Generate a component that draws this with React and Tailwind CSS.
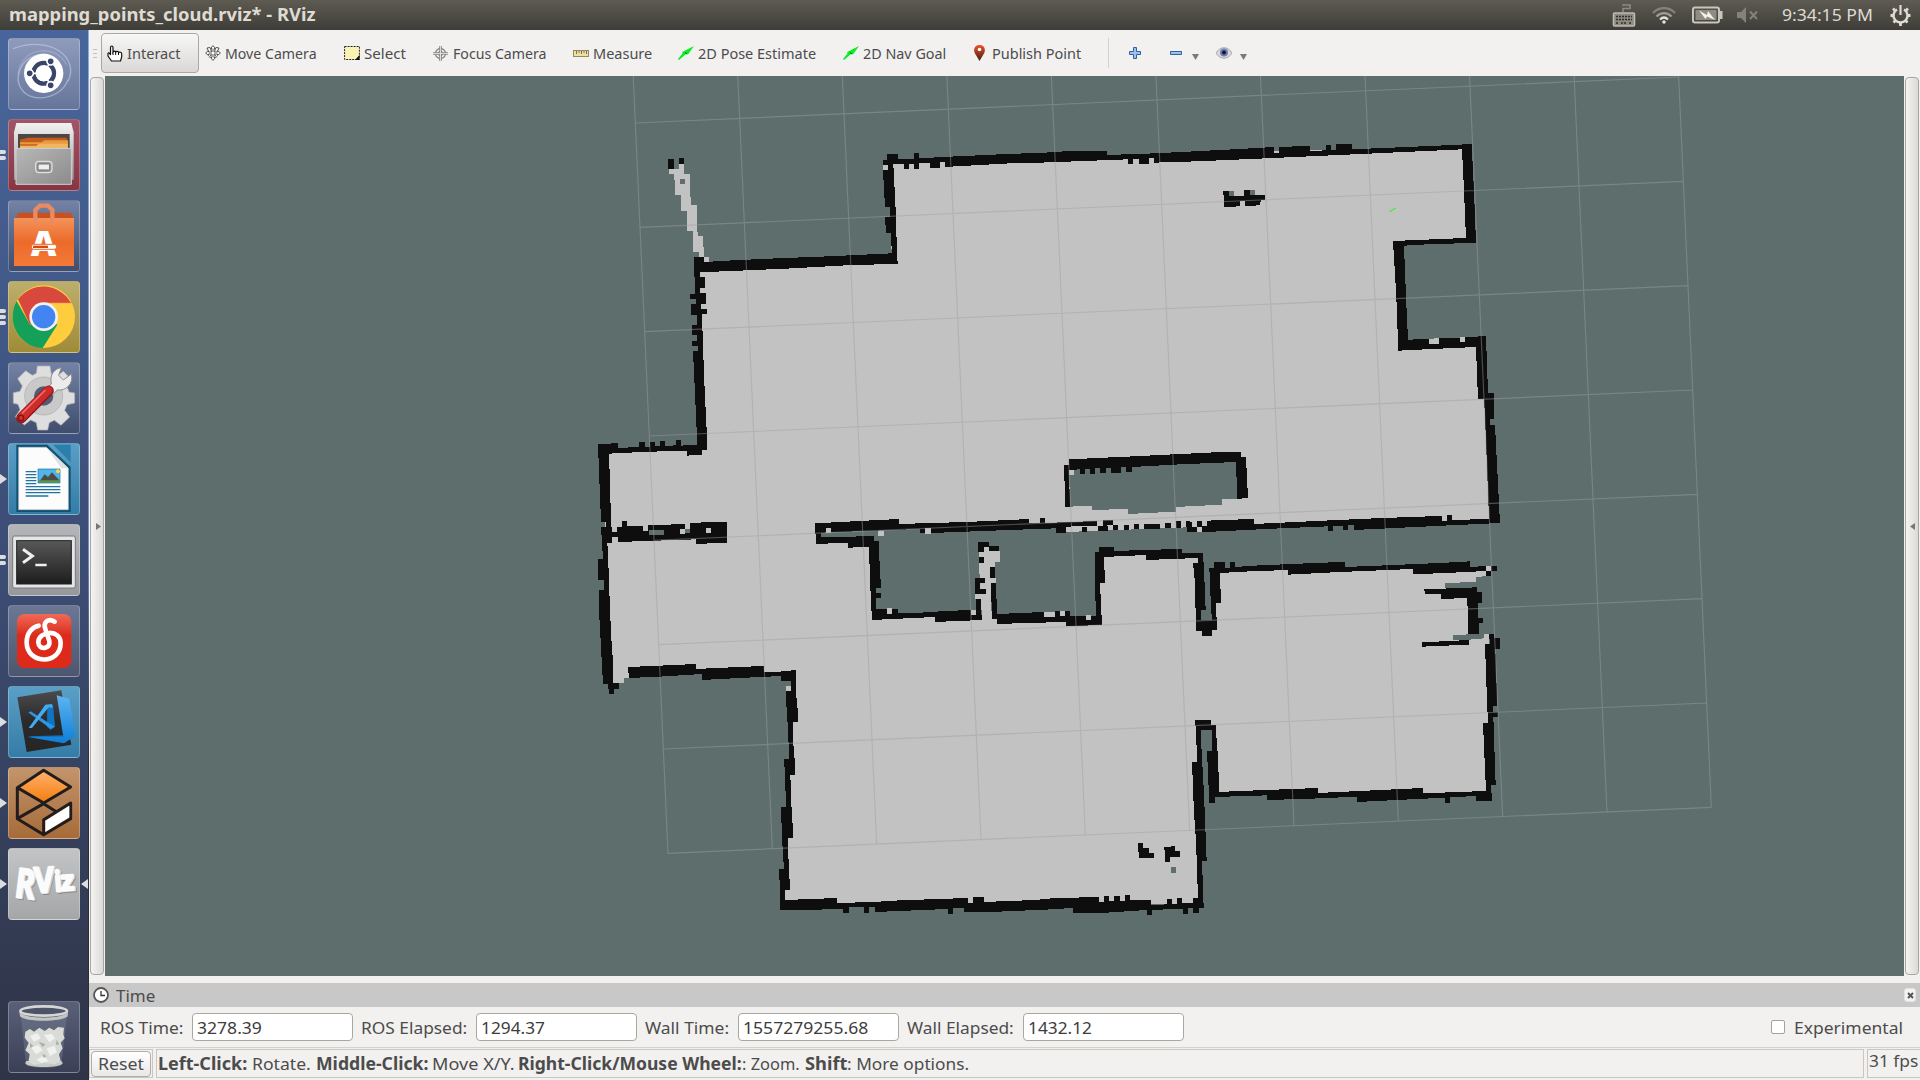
import React, { useLayoutEffect, useRef, useState } from "react";

const FONT = "font-['Noto_Sans','Open_Sans',sans-serif]";

// Text squeezed or stretched horizontally to fill a given width.
function Fit({ w, className = "", children }) {
  const ref = useRef(null);
  const [scale, setScale] = useState(1);
  useLayoutEffect(() => {
    const n = ref.current.offsetWidth;
    if (n) setScale(w / n);
  }, [w]);
  return (
    <span className={`block shrink-0 whitespace-nowrap ${className}`} style={{ width: w }}>
      <span ref={ref} className="inline-block origin-left" style={{ transform: `scaleX(${scale})` }}>
        {children}
      </span>
    </span>
  );
}

const FLOOR =
  "M930 90L2655 50L2675 330L2455 340L2468 645L2705 635L2712 800H2728L2742 1172L2200 1190L1400 1190L715 1195V1238H870L885 1460L1190 1460H1240L1400 1465L1552 1468L1552 1270L1860 1275L1858 1490H1903L1905 1320L2718 1315V1338L2688 1342V1355L2595 1360V1375H2680V1512L2619 1516V1531L2685 1528L2712 1525V1512H2727L2735 1750L2725 1990L1895 1992V1790H1855V2322L610 2325L640 1630L147 1615V1644H132V1659H99L75 1230V960L360 950L355 400L935 385Z";

const A_BLACK =
  "M909 90H922V72H954V88L1002 86V69H1017V85L1110 80L1260 73L1440 66V96L1290 100L1110 110H1095V96H1080V113H1050V99L1017 100V117H1002V101H987V117H972V102L940 103L948 258L950 340L953 402L815 405L620 416L500 421L360 427V441H374V473H360V489H378V521H363V537H380V552H366L369 650L374 780L380 900V960H366V974L321 977V963H270L120 969L87 971L90 1060L93 1175L96 1206V1239H81V1262H66V1240L63 1190H78V1175H63L60 1100L54 942H93V939H114V954L177 951V936H195V951H210V936H225V949H240V933H255V948L288 946V930H302V947L352 944L345 790L339 663H354V648H336V632H350V615H336V585H350V554H333V521H348V507H330V491H345V440H342V381H372V396L460 391L590 385L720 380L810 376L936 370L932 308H918L915 262H930V230H915L909 120ZM264 87H282V117H264ZM297 84H312V102H297Z" +
  "M90 1206H111V1190H126V1173H141V1187H189V1203H205V1186L315 1182V1197H330V1179L396 1176H441V1238L348 1242V1228L200 1233L114 1236V1221H90Z" +
  "M705 1180L840 1173L957 1167V1182L1160 1176L1347 1167V1180L1380 1178V1164H1395V1178H1440V1209H1428V1195L1260 1201L1055 1209H1020V1197L723 1208V1222L805 1221L851 1218H879V1233H897V1260H867V1251L805 1253V1238L708 1242Z";

const B_BLACK =
  "M0 69L105 62H200V75L345 70L600 57L702 51V68H717V52L780 48H810V63L858 61V45H873V60H888V42H936V58L1240 45L1295 42L1302 180L1308 339L1180 342L1092 347L1098 500L1104 629L1165 627L1313 620V618H1338L1344 789H1362V867H1350V885H1365L1380 1179L1230 1186L942 1200V1186H925V1201H910V1187H879V1203H864V1189L720 1195L500 1206H442V1175H456V1190H471V1173H486V1187H501V1172L580 1169L642 1167V1182L830 1173L1005 1165L1140 1160L1206 1158V1173H1221V1155H1236V1170L1347 1167L1335 860L1332 807H1314L1308 651L1200 656L1075 662L1069 500L1059 333L1180 328L1278 324L1272 180L1266 58L985 71L700 84L470 94L342 98V84H327V101H297V87H279V101H264V88L0 98Z" +
  "M0 1164H15V1179L170 1173V1188H189V1171H218V1185H204V1190H78V1209H48V1193L0 1195Z";

const B_DOTS =
  "M126 1190h15v16h-15zM173 1187h31v17h-31zM220 1186h15v15h-15zM252 1185h15v15h-15zM282 1182h15v15h-15zM313 1182h47v14h-47zM376 1179h17v16h-17zM408 1172h15v23h-15zM438 1174h12v16h-12z";

const PILLAR =
  "M87 988L280 979L545 966H603V981H618L624 1104L591 1107V1080L588 996L420 1003L276 1011V1026H258V1011H243V1028H213V1014H198V1029H180V1015H165V1031H150V1017H135V1032H120V1018L87 1020L90 1130H76L72 1005H87ZM550 183H567V197H612V180H630V195H675V209H663L660 226L615 228V213H600V229L552 231Z";

const C_BLACK =
  "M66 120H81L84 157L87 250L93 400L99 485V549H117V567H102V582H87V567H84V552H69L57 330V270H72V240H54V178H69Z" +
  "M144 501L240 497L348 492V507L478 501L551 498V515H600L648 510V558L651 625H654V666H640L639 700L642 774H645V825H631L634 921H636L639 1013H624L627 1137H630V1169H615V1200L771 1194V1209L880 1206L960 1201L1164 1194V1209H1179V1191H1212V1206L1440 1197V1227L1210 1237H1152V1225H1119V1242H1104V1227L885 1236V1221H867V1239H852V1221H806V1239H789V1226L690 1230H600V1170L597 1107H612L606 1013L603 921H618L615 825L612 777H627L624 666H621L618 573V558H633V543H603V528L480 534L366 540V522L240 530L147 534Z" +
  "M851 108H882V123H897L900 237H903V264H888V279H903V295H888V327H953V340L1075 336V334L1173 330V345H1188V297H1203V345H1206V360L1065 366V351L876 360L870 240L867 140H805V126H851Z";

const C_POST =
  "M1194 126H1227V138H1257V153H1227V141H1212V156H1194ZM1197 171H1212V188H1197ZM1230 201H1245V234H1230ZM1185 234H1215V249H1200V267H1218V282H1185ZM1233 249H1248L1251 342L1440 334V366L1251 372V357H1236Z";

const D_BLACK =
  "M0 337L75 333H90V348H168L170 344H167L165 156H162H177V141H222V153L318 150L412 147H426V160H489L492 210L497 330H483V360L516 361L513 320L508 204H522V186H555V203H570V186H585V201L660 196L850 188L915 186V201L1040 196L1200 189L1290 184V200L1338 199V198H1370V213H1353V227H1338V213L1200 220L1119 222V207L900 216L745 224V210L630 214L540 219L543 310H528L531 390H516V408H486V393H468L465 250L459 188H474V174L318 180V165L192 171L195 248H180L186 375L78 379V366L0 368Z" +
  "M1153 268L1310 262V276H1326V308H1313V354H1329V370H1316V402H1284V340L1281 294L1203 297V282H1155ZM1146 427L1287 420V434L1146 440Z" +
  "M1347 402H1362V414H1380V446H1366L1372 618H1360V636H1373V650H1360L1367 855H1353L1356 903H1308V888L1230 892V909H1215V893L950 906V890L815 896L681 900V886L525 891V908H508L501 753H516V689H483V720L492 880L500 1083H486L491 1223H476V1239H460V1225H443V1241H429V1226L335 1230V1245H320V1230L200 1238H99V1224L0 1230V1197L60 1194L177 1191V1205H192V1189H207V1203H222V1188H240V1203H255V1186H270V1200H333V1216L381 1213V1197H396V1212H411V1194H426V1210H460V1195H474L468 1020L462 940L456 786H471L468 677H465V660H513V674H528L531 753H534L537 876L600 873L835 864V879L1148 864V880L1338 873L1329 670H1344L1341 600L1335 432H1350Z" +
  "M294 1029H309V1044H327V1059H342V1074H297V1055H294ZM372 1041H393V1038H405V1053H420V1070H390V1085H375V1050H372Z";

function gridPath() {
  let d = "";
  for (let i = 0; i <= 10; i++) {
    const x = 264 + 313 * i, y = 2170 - 13.8 * i;
    d += `M${x} ${y}L${x - 140} ${y - 3130}`;
    const u = 264 - 14 * i, v = 2170 - 313 * i;
    d += `M${u} ${v}L${u + 3130} ${v - 138}`;
  }
  return d;
}

function MapView() {
  const bg = "#5e6e6c", free = "#c2c2c2", wall = "#0e0e0e";
  return (
    <svg className="block h-[900px] w-[1799px] bg-[#5e6e6c]" viewBox="105 76 1799 900">
      <g transform="translate(580 130) scale(0.333333)">
        <g shapeRendering="crispEdges">
          <path fill={free} d={FLOOR} />
          <path fill={free} d="M267 117H297V102H312V132H330V175L333 225H351V290L354 318H369L372 380H387V396H372V381H357V366H339V303H321V242H303V195H285V150H282V133H267Z" />
          <path fill={bg} d="M300 147h15v15h-15z" />
          <path fill={bg} d="M723 1200H890V1222H723Z" />
          <path fill={wall} d={A_BLACK} />
          <path fill={bg} d="M207 1201L252 1199V1215H207ZM315 1197h15v12h-15z" />
          <path fill={free} d="M909 105h15v15h-15zM300 1197h15v15h-15zM378 1194h15v15h-15zM738 1194h15v15h-15zM894 1202h18v15h-18zM1035 1195h18v16h-18z" />
          <g transform="translate(1380 0)">
            <path fill={wall} d={B_BLACK} />
            <path fill={free} d="M78 1190L218 1186V1170L442 1165V1192L78 1206ZM170 1173h19v15h-19zM471 1190h15v16h-15zM1167 627L1197 624V641H1167ZM1260 621h15v15h-15z" />
            <path fill={wall} d={B_DOTS} />
            <path fill={wall} d="M189 1171h29v15h-29z" />
            <path fill={bg} d="M87 1005L600 985L591 1107H546V1124L407 1131V1145L264 1152V1137L156 1140V1127L90 1130ZM567 183h15v14h-15zM630 180h15v15h-15z" />
            <path fill={wall} d={PILLAR} />
            <path fill={free} d="M87 1020h15v15h-15z" />
          </g>
          <g transform="translate(0 1110)">
            <path fill={wall} d={C_BLACK} />
            <path fill={free} d="M1197 155H1212V141H1227V153H1260V187H1245V235H1248V249H1233V300L1236 362H1206L1203 297H1185V282H1200Z" />
            <path fill={wall} d={C_POST} />
            <path fill={free} d="M618 558h15v15h-15zM921 324h15v18h-15zM1173 330h15v15h-15zM1392 336h33v15h-33z" />
          </g>
          <g transform="translate(1380 1110)">
            <path fill={wall} d={D_BLACK} />
            <path fill={free} d="M1338 198h15v15h-15zM138 345h15v15h-15zM12 336h33v14h-33zM60 333h15v15h-15z" />
            <path fill={bg} d="M393 1101h15v17h-15z" />
          </g>
        </g>
        <path d={gridPath()} fill="none" stroke="#a0a0a4" strokeOpacity=".46" strokeWidth="3.4" />
        <path d="M2428 245L2447 234" stroke="#3ef02a" strokeWidth="3.5" />
      </g>
    </svg>
  );
}

const TILE = {
  dash: "bg-linear-to-b from-[#8f9bbd] to-[#66759b]",
  red: "bg-linear-to-b from-[#a05568] to-[#883543]",
  blue: "bg-linear-to-b from-[#7483a5] to-[#3f4d6e]",
  gold: "bg-linear-to-b from-[#bcae6d] to-[#a08c36]",
  cyan: "bg-linear-to-b from-[#5a9fc6] to-[#347ca6]",
  gray: "bg-linear-to-b from-[#b4b5b9] to-[#97989c]",
  slate: "bg-linear-to-b from-[#6a7893] to-[#4c566f]",
  brown: "bg-linear-to-b from-[#c3946c] to-[#a66b38]",
  silver: "bg-linear-to-b from-[#c3c4c6] to-[#a5a6a8]",
  dark: "bg-linear-to-b from-[#596078] to-[#3b4057]",
};

function Tile({ tone, marks = 0, active, className = "", children }) {
  return (
    <div className={`flex w-[88px] shrink-0 items-center justify-between ${className}`}>
      <div className="flex w-2 shrink-0 flex-col items-start justify-center gap-[2px]">
        {marks === 1 && <svg className="h-[10px] w-[7px]" viewBox="0 0 7 10"><path d="M0 0L7 5L0 10Z" fill="#dcdde0" /></svg>}
        {marks > 1 && Array.from({ length: marks }, (_, i) => <div key={i} className="h-1 w-[6px] rounded-r-full bg-[#dcdde0]" />)}
      </div>
      <div className={`h-[72px] w-[72px] shrink-0 overflow-hidden rounded-[4px] border border-white/25 ${TILE[tone]}`}>
        <svg className="-m-px h-[72px] w-[72px]" viewBox="0 0 216 216">{children}</svg>
      </div>
      <div className="flex w-2 shrink-0 justify-end">
        {active && <svg className="h-[10px] w-[7px]" viewBox="0 0 7 10"><path d="M7 0V10L0 5Z" fill="#dcdde0" /></svg>}
      </div>
    </div>
  );
}

function Defs() {
  return (
    <svg className="absolute h-0 w-0">
      <defs>
        <linearGradient id="metal" x2="0" y2="1"><stop stopColor="#f2f2f2" /><stop offset="1" stopColor="#9a9a9a" /></linearGradient>
        <linearGradient id="drawer" x2="1" y2="1"><stop stopColor="#b8b8b8" /><stop offset="1" stopColor="#8b8b8b" /></linearGradient>
        <linearGradient id="bag" x2="0" y2="1"><stop stopColor="#f4935a" /><stop offset=".5" stopColor="#ec6a2a" /><stop offset="1" stopColor="#f47a38" /></linearGradient>
        <linearGradient id="term" x2="0" y2="1"><stop stopColor="#585858" /><stop offset="1" stopColor="#1d1d1d" /></linearGradient>
        <linearGradient id="slab" x2="0" y2="1"><stop stopColor="#4c4c4e" /><stop offset=".5" stopColor="#2a2a2b" /><stop offset="1" stopColor="#262627" /></linearGradient>
        <linearGradient id="vside" x2="0" y2="1"><stop stopColor="#5db4f2" /><stop offset="1" stopColor="#0d7fd8" /></linearGradient>
        <linearGradient id="boxtop" x2="0" y2="1"><stop stopColor="#ffb26c" /><stop offset="1" stopColor="#f57c0e" /></linearGradient>
        <linearGradient id="pin" x2="0" y2="1"><stop stopColor="#f0502c" /><stop offset="1" stopColor="#3c2010" /></linearGradient>
        <linearGradient id="netred" x2="0" y2="1"><stop stopColor="#ef6a58" /><stop offset=".4" stopColor="#dd2a1b" /></linearGradient>
      </defs>
    </svg>
  );
}

function RvizLetters({ fill, stroke, dx = 0, dy = 0 }) {
  return (
    <g fill={fill} stroke={stroke} strokeWidth="6" strokeLinejoin="round" transform={`translate(${dx} ${dy})`} className="font-['Open_Sans']" fontWeight="700">
      <text transform="translate(18 146) rotate(7) scale(.74 1)" fontSize="122">R</text>
      <text transform="translate(80 134) rotate(-2) scale(.86 1)" fontSize="106">V</text>
      <text transform="translate(142 130) rotate(-4) scale(.8 1)" fontSize="84">i</text>
      <text transform="translate(160 128) rotate(-4)" fontSize="84">z</text>
    </g>
  );
}

function Launcher() {
  return (
    <aside className="flex shrink-0">
      <div className="flex w-[88px] flex-col gap-[9px] bg-linear-to-b from-[#48669c] via-[#3c4d75] via-50% to-[#2f3446] pt-2">
        <Tile tone="dash">
          <g fill="none" stroke="#cdd4e8" strokeOpacity=".55" strokeWidth="4">
            <path d="M30 130C30 70 70 50 110 48M15 32C130-10 215 60 180 130M180 125C160 190 40 205 30 125" />
            <path d="M30 110C40 20 150 20 175 80" strokeOpacity=".3" />
          </g>
          <circle cx="107" cy="106" r="59" fill="#fff" />
          <circle cx="107" cy="106" r="31" fill="none" stroke="#39466a" strokeWidth="13" />
          <path d="M107 106L56 106M107 106L133 62M107 106L133 150" stroke="#fff" strokeWidth="5" />
          <g stroke="#fff" strokeWidth="5" fill="#39466a"><circle cx="65" cy="106" r="11" /><circle cx="128" cy="70" r="11" /><circle cx="128" cy="142" r="11" /></g>
          <circle cx="107" cy="106" r="24" fill="#fff" />
        </Tile>
        <Tile tone="red" marks={2}>
          <path d="M25 12H190L197 40V182H18V40Z" fill="url(#metal)" />
          <path d="M30 45H185V150H30Z" fill="#4a4744" />
          <path d="M36 62L60 56H176L180 90H36Z" fill="#c75b1c" />
          <path d="M36 70H100L110 64H180V76H36Z" fill="#e89a40" /><path d="M36 80H85L92 74H180V90H36Z" fill="#efb65f" />
          <path d="M24 88H190V196H24Z" fill="url(#drawer)" stroke="#d0d0d0" strokeWidth="3" />
          <rect x="83" y="127" width="49" height="34" rx="10" fill="#999" stroke="#dedede" strokeWidth="4" />
          <rect x="90" y="135" width="35" height="18" rx="3" fill="#eee" stroke="#6f6f6f" strokeWidth="3" />
        </Tile>
        <Tile tone="blue">
          <path d="M25 54L30 38H188L196 54Z" fill="#c9511f" />
          <path d="M18 54H198V198H18Z" fill="url(#bag)" />
          <path d="M82 70V30L96 17H120L133 30V70" fill="none" stroke="#e98a63" strokeWidth="13" />
          <text x="107" y="168" textAnchor="middle" fontSize="106" fontWeight="800" fill="#fff" className="font-['Open_Sans']">A</text>
          <rect x="70" y="133" width="76" height="15" rx="7" fill="#fff" stroke="#ec6a2a" strokeWidth="3" /><rect x="75" y="137" width="45" height="7" fill="#d9480f" />
        </Tile>
        <Tile tone="gold" marks={3}>
          <circle cx="107" cy="107" r="94" fill="#fdcd3e" />
          <path d="M107 107L66 131L26 60A94 94 0 0 0 104 201L148 131Z" fill="#15a05a" />
          <path d="M188 65A94 94 0 0 0 30 55L66 131L107 65Z" fill="#d8483d" />
          <path d="M107 65H190" stroke="#e0564b" strokeWidth="2" />
          <circle cx="107" cy="107" r="43" fill="#f1f1f1" /><circle cx="107" cy="107" r="35" fill="#4384f3" />
        </Tile>
        <Tile tone="blue">
          <path d="M88 12h38l4 24 16 7 20-15 25 25-14 21 6 16 17 3v30l-23 5-7 17 15 20-26 25-20-15-15 7-5 22H89l-4-22-17-8-19 15-27-25 14-21-6-16-14-3V92l20-4 7-16-14-22 24-24 20 14 12-6Z" fill="#dedede" stroke="#b0b0b0" strokeWidth="2" />
          <circle cx="107" cy="102" r="43" fill="#525d75" stroke="#c9c9c9" strokeWidth="28" /><circle cx="107" cy="102" r="57" fill="none" stroke="#aaa" strokeWidth="2" />
          <path d="M130 66C124 36 140 20 160 17L152 40L166 54L190 36C198 66 172 88 148 84L134 98L114 80Z" fill="#ececec" stroke="#8c8c8c" strokeWidth="3" />
          <path d="M40 168L122 86" stroke="#8d1616" strokeWidth="31" strokeLinecap="round" />
          <path d="M40 167L121 85" stroke="#cf2b2a" strokeWidth="25" strokeLinecap="round" />
          <path d="M42 154L112 84" stroke="#e9716b" strokeWidth="5" />
          <circle cx="39" cy="168" r="8" fill="#d9302d" stroke="#7d1212" strokeWidth="4" />
        </Tile>
        <Tile tone="cyan" marks={1}>
          <path d="M25 5H118L188 72V207H25Z" fill="#0e5173" />
          <path d="M32 13H115L181 76V200H32Z" fill="#fcfcfc" stroke="#c6c6c6" strokeWidth="2" />
          <path d="M115 13L181 76H160Z" fill="#e0e0e0" /><path d="M135 5H188V58Z" fill="#2b7fab" />
          <path d="M53 86h32M53 95h32M53 104h32M53 113h32M53 122h32M53 131h104M53 140h104M53 149h104M53 159h68" stroke="#2173a0" strokeWidth="4" />
          <path d="M90 78H156V120H90Z" fill="#53b4e8" stroke="#1574ab" strokeWidth="2" />
          <path d="M92 118L110 94L120 102L132 88L154 112V118Z" fill="#4a4e47" /><path d="M92 112H154V118H92Z" fill="#5d963b" /><circle cx="150" cy="85" r="6" fill="#f7d643" />
        </Tile>
        <Tile tone="gray" marks={2}>
          <rect x="14" y="36" width="188" height="156" rx="6" fill="#e5e5e5" stroke="#77787b" strokeWidth="3" />
          <rect x="26" y="50" width="164" height="130" fill="url(#term)" stroke="#222" strokeWidth="3" />
          <path d="M45 76L73 96L45 116" fill="none" stroke="#efefef" strokeWidth="9" /><path d="M82 123H116" stroke="#efefef" strokeWidth="8" />
        </Tile>
        <Tile tone="slate">
          <rect x="27" y="27" width="163" height="162" rx="22" fill="url(#netred)" />
          <path d="M140 50C120 38 105 52 112 72L124 108C130 132 92 138 91 112C91 78 158 70 158 115C158 180 56 180 56 112C56 82 74 66 92 62" fill="none" stroke="#fff" strokeWidth="14" strokeLinecap="round" />
        </Tile>
        <Tile tone="cyan" marks={1}>
          <path d="M28 34L160 13L190 176L56 198Z" fill="url(#slab)" />
          <path d="M58 151L165 148L168 170Z" fill="#0b6fbd" />
          <path d="M146 28L184 38L202 150L168 172L60 153L166 152Z" fill="url(#vside)" />
          <path d="M118 60L135 56L141 122L128 132L117 122Z" fill="#0f74c2" />
          <path d="M62 80L128 128L140 122L68 76L55 84Z" fill="#2b96e6" />
          <path d="M62 126L112 56L132 54L134 66L122 64L72 126Z" fill="#45a9f0" />
        </Tile>
        <Tile tone="brown" marks={1}>
          <path d="M107 10L188 60L107 108L28 62Z" fill="url(#boxtop)" stroke="#211d1d" strokeWidth="9" strokeLinejoin="round" />
          <path d="M28 62V155L107 203L188 155V108L107 158V203M28 155L107 110L145 134" fill="none" stroke="#211d1d" strokeWidth="9" strokeLinejoin="round" />
          <path d="M112 161L184 116V151L112 195Z" fill="#fff" />
        </Tile>
        <Tile tone="silver" marks={1} active>
          <RvizLetters fill="#8a8b8e" stroke="#8a8b8e" dx={5} dy={5} />
          <RvizLetters fill="#d4d4d4" stroke="#d4d4d4" dx={3} dy={2} />
          <RvizLetters fill="#fbfbfb" stroke="#fbfbfb" dx={-1} />
        </Tile>
        <Tile tone="dark" className="mt-auto mb-[7px]">
          <path d="M38 38L54 192C75 204 142 204 160 192L178 38Z" fill="#8c94a6" fillOpacity=".3" />
          <path d="M52 186C52 202 164 202 164 186L160 180H55Z" fill="#c6ccc6" />
          <path d="M52 92L66 84L78 92L94 80L110 90L124 80L138 88L150 78L168 80L166 100L170 112L158 125L164 142L153 160L158 180L140 190L107 186L80 192L61 184L65 160L52 148L62 126L50 110Z" fill="#d9dbd7" />
          <path d="M66 105L88 96L98 112L78 122ZM108 102L130 98L142 112L124 124ZM70 140L90 132L104 148L84 160ZM116 142L140 134L146 154L126 166ZM86 176L106 164L122 180L100 186Z" fill="#f1f2ef" />
          <path d="M92 122L112 130L104 138ZM66 126L76 134L66 142ZM146 116L154 130L144 132ZM104 158L116 166L106 170Z" fill="#a9aea9" />
          <ellipse cx="107" cy="30" rx="70" ry="14" fill="#4d5468" stroke="#d5d6d5" strokeWidth="8" />
          <path d="M34 32C50 56 165 56 180 32L179 46C160 64 52 64 36 46Z" fill="#c4c5c3" />
        </Tile>
      </div>
      <div className="w-px bg-linear-to-b from-[#86aee6] via-[#6b8cc4] via-50% to-[#2a2e3c] to-70%" />
    </aside>
  );
}

function TitleBar() {
  return (
    <header className="flex h-[30px] shrink-0 items-center bg-linear-to-b from-[#5e5b52] to-[#3e3d38] pl-[9px] text-[#dfdbd2]">
      <Fit w={306} className="text-[17px] leading-[30px] font-bold">mapping_points_cloud.rviz* - RViz</Fit>
      <div className="ml-auto flex items-center pr-[9px]">
        <svg className="mr-4 h-6 w-6" viewBox="0 0 24 24" fill="none" stroke="#bdbab2" strokeWidth="1.6">
          <rect x="1.5" y="10" width="21" height="13" rx="1" fill="#8d8a82" /><path d="M11 9V5.500H18V2H10" stroke="#8d8a82" />
          <path d="M4 13.500H20M4 16.500H20M4 20H7M9 20H15M17 20H20" strokeDasharray="2 1" stroke="#2f2e2b" />
        </svg>
        <svg className="mr-4 h-[17px] w-6" viewBox="0 0 24 17" fill="none" strokeWidth="2.200">
          <path d="M1 6C7-.5 17-.5 23 6" stroke="#85827a" /><path d="M4.500 9.500C9 5 15 5 19.500 9.500" stroke="#9f9c94" /><path d="M8 12.500C10.500 10 13.500 10 16 12.500" stroke="#e5e1d8" /><circle cx="12" cy="15" r="1.800" fill="#e5e1d8" />
        </svg>
        <svg className="mr-[14px] h-[18px] w-[31px]" viewBox="0 0 31 18">
          <rect x="1" y="1.500" width="26" height="15" rx="2" fill="none" stroke="#c9c6bd" strokeWidth="2" /><rect x="3.500" y="4" width="21" height="10" fill="#8f8c84" />
          <path d="M28 5H30.500V13H28Z" fill="#c9c6bd" /><path d="M7 4.500L15 9L16 5L23 14L15 10.500L13.500 13Z" fill="#f4f1ea" />
        </svg>
        <svg className="mr-[23px] h-4 w-[22px]" viewBox="0 0 22 16"><path d="M0 5H4L9 0V16L4 11H0Z" fill="#85827a" /><path d="M13 4.500L20 12M20 4.500L13 12" stroke="#85827a" strokeWidth="2" /></svg>
        <Fit w={91} className="mr-[17px] text-[17px] leading-[30px]">9:34:15 PM</Fit>
        <svg className="h-[21px] w-[21px]" viewBox="0 0 21 21" fill="none" stroke="#dfdbd2">
          <path d="M7 4.500A7 7 0 1 0 14 4.500" strokeWidth="2.400" /><path d="M10.500 0V10" strokeWidth="2.200" />
          <path d="M.5 10.500H3M18 10.500H20.500M10.500 18V21M3.500 17.500L5.500 15.500M17.500 17.500L15.500 15.500M3 3.500L5 5.500M18 3.500L16 5.500" strokeWidth="2.800" />
        </svg>
      </div>
    </header>
  );
}

const icons = {
  hand: <svg className="h-[17px] w-4" viewBox="0 0 16 17"><path d="M3.500 10V2.500C3.500.5 6 .5 6 2.500V7C7 5.500 8.500 6 8.700 7C9.500 5.800 11.300 6.200 11.500 7.500C13 6.500 14.700 7.500 14.700 9V12L13.500 16H4.500L1 11V8.500C1.500 7.500 3 8 3.500 10Z" fill="#fff" stroke="#111" strokeWidth="1.200" /><path d="M6 7V10M8.700 7V10M11.500 7.500V10" stroke="#111" /></svg>,
  move: <svg className="h-4 w-4" viewBox="0 0 16 16" fill="#fff" stroke="#555"><path d="M8 .6L10.500 3.500H9V7H12.500V5.500L15.400 8L12.500 10.500V9H9V12.500H10.500L8 15.400L5.500 12.500H7V9H3.500V10.500L.6 8L3.500 5.500V7H7V3.500H5.500Z" /><path d="M2 3L5 2.500L6.500 6.500M14 3L11 2.500L9.500 6.500M2 3L3 5.500M14 3L13 5.500M4 12.500L6 10M12 12.500L10 10" /></svg>,
  select: <svg className="h-4 w-4" viewBox="0 0 16 16"><rect x=".6" y="1.500" width="14.800" height="13" fill="#fbf3b4" stroke="#222" strokeDasharray="2 1" /><path d="M15.500 10V15H11Z" fill="#111" /></svg>,
  focus: <svg className="h-[17px] w-[17px]" viewBox="0 0 17 17" fill="none" stroke="#888"><circle cx="8.500" cy="8.500" r="5" strokeWidth="1.300" /><circle cx="8.500" cy="8.500" r="2.300" /><path d="M8.500 1V16M1 8.500H16" strokeWidth="2.600" /><path d="M8.500 1V16M1 8.500H16" stroke="#eee" strokeWidth=".8" /></svg>,
  ruler: <svg className="h-[7px] w-4" viewBox="0 0 16 7"><rect x=".5" y=".5" width="15" height="6" fill="#eee1a0" stroke="#938968" /><path d="M3.500 1V4M6 1V3M8.500 1V4M11 1V3M13.500 1V4" stroke="#777052" /></svg>,
  arrow: <svg className="h-[14px] w-4" viewBox="0 0 16 14"><path d="M0 13L4.500 7.500L4.200 6L16 0L10 8.500L8 8L1 14Z" fill="#07ee26" /><path d="M7 6.500L9 8" stroke="#075b12" /></svg>,
  pin: <svg className="h-4 w-[11px]" viewBox="0 0 11 16"><path d="M5.500 0C-.5 0-.5 6 1 8.500L5.500 16L10 8.500C11.500 6 11.500 0 5.500 0Z" fill="url(#pin)" /><circle cx="5.500" cy="4.500" r="1.800" fill="#fff" /></svg>,
};

const TOOLS = [
  ["move", "Move Camera", 92, "ml-[6px] w-[139px]"],
  ["select", "Select", 42, "w-[88px]"],
  ["focus", "Focus Camera", 94, "w-[141px]"],
  ["ruler", "Measure", 59, "w-[105px]"],
  ["arrow", "2D Pose Estimate", 118, "w-[165px]"],
  ["arrow", "2D Nav Goal", 83, "w-[131px]"],
  ["pin", "Publish Point", 89, "w-[134px]"],
];

const Caret = ({ className }) => <svg className={`mt-[7px] h-[6px] w-[7px] ${className}`} viewBox="0 0 7 6"><path d="M0 0H7L3.500 6Z" fill="#7b7b7b" /></svg>;

function Toolbar() {
  return (
    <div className="flex h-[46px] shrink-0 items-center bg-[#f2f1f0] pl-1 text-[14px] leading-5 text-[#4c4c4c]">
      <div className="flex w-[4px] flex-col gap-[3px]"><i className="h-px bg-[#c4c1bd]" /><i className="h-px bg-[#c4c1bd]" /><i className="h-px bg-[#c4c1bd]" /></div>
      <div className="ml-1 flex h-10 w-[98px] items-center gap-1 rounded-[4px] border border-[#aaa8a4] bg-linear-to-b from-[#f7f7f6] to-[#d9d8d6] pl-[5px]">
        {icons.hand}<Fit w={53} className="pt-[2px]">Interact</Fit>
      </div>
      {TOOLS.map(([icon, label, w, cls]) => (
        <div key={label} className={`flex shrink-0 items-center gap-[4px] ${cls}`}>
          <span className="shrink-0">{icons[icon]}</span><Fit w={w} className={icon === "pin" ? "ml-[3px] pt-[2px]" : "pt-[2px]"}>{label}</Fit>
        </div>
      ))}
      <div className="h-[30px] w-px bg-[#d5d2ce]" />
      <svg className="ml-5 h-3 w-3" viewBox="0 0 12 12"><path d="M4.500.5H7.500V4.500H11.500V7.500H7.500V11.500H4.500V7.500H.5V4.500H4.500Z" fill="#9cc2ec" stroke="#315fa6" /></svg>
      <svg className="ml-[29px] h-1 w-3" viewBox="0 0 12 4"><path d="M.5.5H11.500V3.500H.5Z" fill="#9cc2ec" stroke="#315fa6" /></svg>
      <Caret className="ml-[10px]" />
      <svg className="ml-[17px] h-3 w-4" viewBox="0 0 16 12"><path d="M0 6C4-1 12-1 16 6C12 13 4 13 0 6Z" fill="#d9d9dc" stroke="#aaa" /><circle cx="8" cy="5.500" r="4" fill="#6b7db5" /><circle cx="8" cy="5.500" r="2" fill="#15182c" /></svg>
      <Caret className="ml-2" />
    </div>
  );
}

function Handle({ flip }) {
  return (
    <div className="flex h-[900px] w-4 shrink-0 justify-center bg-[#f2f1f0] py-px">
      <div className={`flex w-[14px] items-center rounded-[4px] border border-[#a9a6a1] bg-linear-to-r from-[#f5f4f3] to-[#dcdad7] ${flip ? "justify-center" : "justify-end pr-[2px]"}`}>
        <svg className={`h-[7px] w-[5px] ${flip ? "rotate-180" : ""}`} viewBox="0 0 5 7"><path d="M0 0L5 3.500L0 7Z" fill="#777" /></svg>
      </div>
    </div>
  );
}

function Field({ label, lw, value, vw, className }) {
  return (
    <div className={`flex items-center gap-[9px] ${className}`}>
      <Fit w={lw} className="pt-px">{label}</Fit>
      <div className="flex h-7 w-[161px] items-center rounded-[4px] border border-[#aaa7a1] bg-white pt-px pl-1 text-[#3c3c3c]"><Fit w={vw}>{value}</Fit></div>
    </div>
  );
}

function TimePanel() {
  return (
    <section className="mt-[7px] text-[17px] leading-6 text-[#4c4c4c]">
      <div className="flex h-6 items-center bg-[#c8c8c8] pr-1 pl-1">
        <svg className="h-4 w-4" viewBox="0 0 16 16"><circle cx="8" cy="8" r="7" fill="#fff" stroke="#555" strokeWidth="1.800" /><path d="M8 4V8.500H12" fill="none" stroke="#333" strokeWidth="1.300" /></svg>
        <Fit w={39} className="ml-[7px] pt-px">Time</Fit>
        <div className="ml-auto flex h-[14px] w-3 items-center justify-center rounded-[3px] border border-[#e2e2e2] bg-[#f3f3f3]">
          <svg className="h-[7px] w-[7px]" viewBox="0 0 7 7"><path d="M1 1L6 6M6 1L1 6" stroke="#555" strokeWidth="2" /></svg>
        </div>
      </div>
      <div className="flex h-10 items-center pl-[11px]">
        <Field label="ROS Time:" lw={83} value="3278.39" vw={65} />
        <Field label="ROS Elapsed:" lw={106} value="1294.37" vw={64} className="ml-2" />
        <Field label="Wall Time:" lw={84} value="1557279255.68" vw={125} className="ml-2" />
        <Field label="Wall Elapsed:" lw={107} value="1432.12" vw={64} className="ml-2" />
        <div className="ml-auto flex items-center gap-[9px] pr-[17px]">
          <div className="h-[14px] w-[14px] rounded-[2px] border border-[#a5a29d] bg-white" />
          <Fit w={109} className="pt-px">Experimental</Fit>
        </div>
      </div>
    </section>
  );
}

function StatusBar() {
  return (
    <footer className="flex h-[33px] items-start border-t border-[#d4d2cf] pt-px text-[17px] leading-[26px] text-[#4c4c4c]">
      <div className="flex h-[29px] w-[64px] items-center justify-center border border-[#c9c7c4]">
        <div className="flex h-[26px] w-[60px] items-center justify-center rounded-[4px] border border-[#b0ada8] bg-linear-to-b from-white to-[#e9e8e7] pt-px"><Fit w={46}>Reset</Fit></div>
      </div>
      <div className="ml-[3px] flex h-[29px] w-[1708px] items-center border border-[#c9c7c4] pt-px pl-px">
        {[["Left-Click:", 89, true, 5], ["Rotate.", 59, false, 5], ["Middle-Click:", 112, true, 4], ["Move X/Y.", 82, false, 4], ["Right-Click/Mouse Wheel:", 224, true, 0], [": Zoom.", 58, false, 5], ["Shift", 42, true, 0], [": More options.", 122, false, 0]].map(([t, w, bold, gap]) => (
          <React.Fragment key={t}>
            <Fit w={w} className={bold ? "font-bold" : ""}>{t}</Fit>
            <span className="shrink-0" style={{ width: gap }} />
          </React.Fragment>
        ))}
      </div>
      <div className="ml-[3px] h-[29px] flex-1 overflow-hidden border border-r-0 border-[#c9c7c4] pl-px leading-[21px]"><Fit w={49}>31 fps</Fit></div>
    </footer>
  );
}

export default function App() {
  return (
    <div className={`flex h-[1080px] w-[1920px] flex-col overflow-hidden bg-[#f2f1f0] ${FONT}`}>
      <Defs />
      <TitleBar />
      <div className="flex h-[1050px]">
        <Launcher />
        <main className="flex w-[1831px] flex-col">
          <Toolbar />
          <div className="flex"><Handle /><MapView /><Handle flip /></div>
          <TimePanel />
          <StatusBar />
        </main>
      </div>
    </div>
  );
}
